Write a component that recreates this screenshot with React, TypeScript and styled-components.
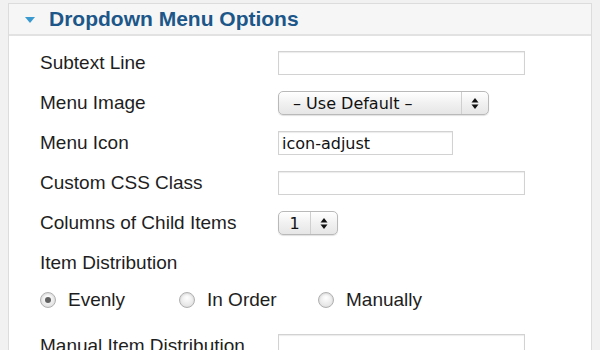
import React, { FC } from 'react';
import styled, { createGlobalStyle } from 'styled-components';

const fontFamily = '"Liberation Sans", Helvetica, Arial, sans-serif';
const controlFont = '"DejaVu Sans", "Lucida Grande", Verdana, sans-serif';
const textColor = '#1e1e1e';
const borderGray = '#dcdcdc';

const GlobalStyle = createGlobalStyle`
  html, body {
    margin: 0;
    padding: 0;
    background: #f1f1f1;
    overflow: hidden;
  }
  * {
    box-sizing: border-box;
  }
`;

const Panel = styled.section`
  margin: 3px 8px 0 8px;
  height: 400px;
  background: #fff;
  border: 1px solid ${borderGray};
  font-family: ${fontFamily};
  color: ${textColor};
`;

const Header = styled.div`
  display: flex;
  align-items: center;
  gap: 14px;
  height: 32px;
  padding: 0 0 1px 16px;
  background: #f6f6f6;
  border-bottom: 2px solid #e2e2e2;
`;

const Caret = styled.span`
  width: 0;
  height: 0;
  border-left: 5px solid transparent;
  border-right: 5px solid transparent;
  border-top: 6px solid #3a9ad0;
  margin-top: 2px;
`;

const Title = styled.h2`
  margin: 0;
  font-size: 21px;
  font-weight: bold;
  color: #1d5789;
`;

const Body = styled.div`
  padding: 7px 0 0 31px;
`;

interface IRowProps {
  height?: number;
}
const Row = styled.div<IRowProps>`
  display: grid;
  grid-template-columns: 238px 1fr;
  align-items: center;
  height: ${props => props.height || 40}px;
`;

const Label = styled.label`
  font-size: 19px;
  white-space: nowrap;
`;

interface IFieldProps {
  width: number;
}
const TextField = styled.input<IFieldProps>`
  width: ${props => props.width}px;
  height: 24px;
  padding: 0 3px;
  border: 1px solid #d2d2d2;
  box-shadow: inset 0 1px 1px rgba(0, 0, 0, 0.08);
  font-family: ${controlFont};
  font-size: 16px;
  color: #111;
  background: #fff;
  outline: none;
`;

const SelectBox = styled.div<IFieldProps>`
  display: flex;
  align-items: center;
  width: ${props => props.width}px;
  height: 24px;
  border: 1px solid #b9b9b9;
  border-radius: 5px;
  background: linear-gradient(#ffffff, #f1f1f1 50%, #e6e6e6);
  box-shadow: 0 1px 1px rgba(0, 0, 0, 0.12);
  font-family: ${controlFont};
  font-size: 16px;
  color: #111;
`;

interface ISelectValueProps {
  center?: boolean;
}
const SelectValue = styled.span<ISelectValueProps>`
  flex: 1;
  padding-left: ${props => (props.center ? 0 : 14)}px;
  text-align: ${props => (props.center ? 'center' : 'left')};
  white-space: nowrap;
`;

const SelectArrows = styled.span`
  display: flex;
  align-items: center;
  justify-content: center;
  width: 27px;
  height: 100%;
  border-left: 1px solid #cfcfcf;
`;

const ArrowIcon: FC = () => (
  <svg width="8" height="13" viewBox="0 0 8 13">
    <path d="M4 1 L7.5 5.5 H0.5 Z" fill="#111" />
    <path d="M4 12 L7.5 7.5 H0.5 Z" fill="#111" />
  </svg>
);

const RadioGroup = styled.div`
  display: flex;
  align-items: center;
`;

const RadioOption = styled.label`
  display: flex;
  align-items: center;
  gap: 12px;
  width: 139px;
  font-size: 19px;
`;

interface IRadioDotProps {
  checked?: boolean;
}
const RadioDot = styled.span<IRadioDotProps>`
  position: relative;
  width: 16px;
  height: 16px;
  border-radius: 50%;
  border: 1px solid #b0b0b0;
  background: radial-gradient(circle at 50% 35%, #ffffff, #e6e6e6 70%, #d6d6d6);
  box-shadow: inset 0 1px 2px rgba(0, 0, 0, 0.1);

  &::after {
    content: '';
    display: ${props => (props.checked ? 'block' : 'none')};
    position: absolute;
    top: 4px;
    left: 4px;
    width: 6px;
    height: 6px;
    border-radius: 50%;
    background: #606060;
  }
`;

const RadioRow = styled.div`
  height: 34px;
  display: flex;
  align-items: center;
  margin-bottom: 9px;
`;

const distributions = [
  { id: 'even', label: 'Evenly', checked: true },
  { id: 'order', label: 'In Order', checked: false },
  { id: 'manual', label: 'Manually', checked: false }
];

const App: FC = () => (
  <>
    <GlobalStyle />
    <Panel>
      <Header>
        <Caret />
        <Title>Dropdown Menu Options</Title>
      </Header>
      <Body>
        <Row>
          <Label>Subtext Line</Label>
          <TextField width={247} defaultValue="" />
        </Row>
        <Row>
          <Label>Menu Image</Label>
          <SelectBox width={211}>
            <SelectValue>– Use Default –</SelectValue>
            <SelectArrows>
              <ArrowIcon />
            </SelectArrows>
          </SelectBox>
        </Row>
        <Row>
          <Label>Menu Icon</Label>
          <TextField width={175} defaultValue="icon-adjust" />
        </Row>
        <Row>
          <Label>Custom CSS Class</Label>
          <TextField width={247} defaultValue="" />
        </Row>
        <Row>
          <Label>Columns of Child Items</Label>
          <SelectBox width={60}>
            <SelectValue center>1</SelectValue>
            <SelectArrows>
              <ArrowIcon />
            </SelectArrows>
          </SelectBox>
        </Row>
        <Row>
          <Label>Item Distribution</Label>
        </Row>
        <RadioRow>
          <RadioGroup>
            {distributions.map(({ id, label, checked }) => (
              <RadioOption key={id}>
                <RadioDot checked={checked} />
                {label}
              </RadioOption>
            ))}
          </RadioGroup>
        </RadioRow>
        <Row>
          <Label>Manual Item Distribution</Label>
          <TextField width={247} defaultValue="" />
        </Row>
      </Body>
    </Panel>
  </>
);

export default App;
